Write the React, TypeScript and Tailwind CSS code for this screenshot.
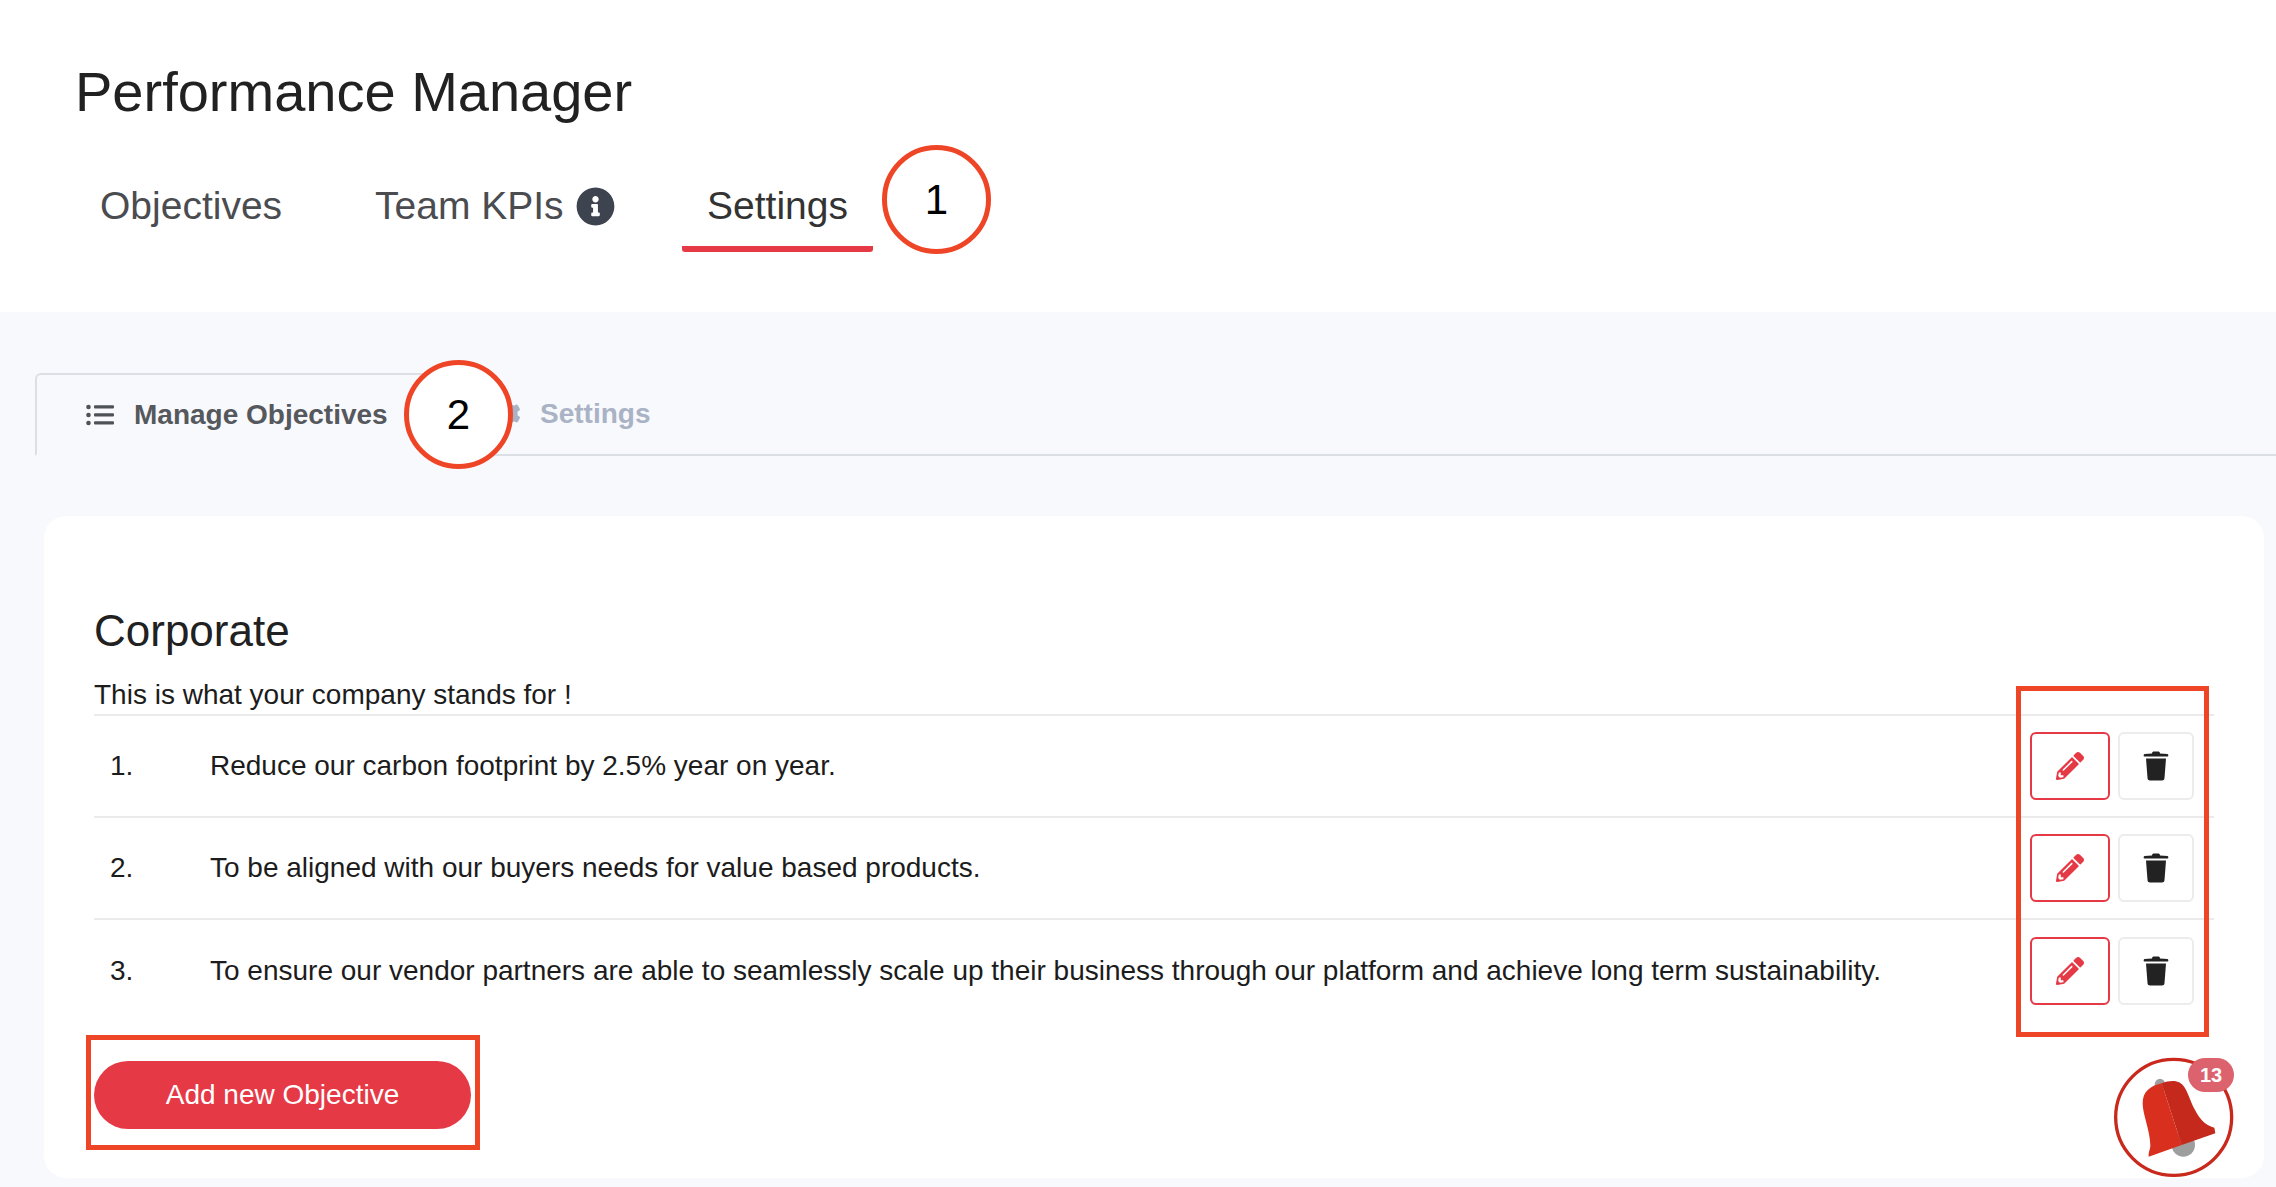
import { FaPencilAlt, FaInfoCircle, FaCog } from 'react-icons/fa'

const font = "font-['Liberation_Sans',Arial,sans-serif]"

const objectives = [
  'Reduce our carbon footprint by 2.5% year on year.',
  'To be aligned with our buyers needs for value based products.',
  'To ensure our vendor partners are able to seamlessly scale up their business through our platform and achieve long term sustainability.',
]

function TrashIcon() {
  return (
    <svg viewBox="0 0 26 30" className="w-[26px] h-[30px]">
      <path fill="#222" d="M9 2.5 C9 1 10 .5 11 .5 H15 C16 .5 17 1 17 2.5 L24.5 3 C25.5 3.2 25.8 5.5 24.5 5.5 H1.5 C.2 5.5 .5 3.2 1.5 3 Z" />
      <path fill="#222" d="M3 7.5 H23 L21.5 27 C21.3 28.8 20.4 29.5 19 29.5 H7 C5.6 29.5 4.7 28.8 4.5 27 Z" />
    </svg>
  )
}

function Bell() {
  return (
    <div className="absolute left-[2100px] top-[1050px] h-[137px] w-[150px]">
      <svg viewBox="0 0 450 411" className="h-[137px] w-[150px]">
        <circle cx="221" cy="202" r="174" fill="#fff" stroke="#c9281c" strokeWidth="10" />
        <ellipse cx="180" cy="106" rx="16" ry="20" fill="#9e9e9e" />
        <circle cx="250" cy="285" r="35" fill="#9e9e9e" />
        <path fill="#d92f1e" d="M185 100 C150 108 128 125 128 160 C128 195 150 240 151 285 C151 300 145 303 146 320 L245 285 Z" />
        <path fill="#c4291b" d="M185 100 C205 92 225 90 240 98 C262 112 268 150 285 180 C300 210 320 228 343 233 L346 250 L245 285 Z" />
      </svg>
      <span className="absolute left-[88px] top-[8px] flex h-[34px] w-[46px] items-center justify-center rounded-full bg-[#dc626d] text-[20px] font-bold text-white">
        13
      </span>
    </div>
  )
}

export default function App() {
  return (
    <div className={`relative h-[1187px] w-[2276px] overflow-hidden bg-[#f8f9fc] ${font}`}>
      <header className="h-[312px] bg-white pl-[75px] pt-[58px]">
        <h1 className="text-[56px] leading-[68px] text-[#212121]">Performance Manager</h1>
        <nav className="mt-[55px] flex items-start text-[39px] leading-[50px] text-[#4a4c50]">
          <a className="ml-[25px] w-[275px]">Objectives</a>
          <a className="flex w-[307px] items-center gap-[12px]">
            Team KPIs
            <FaInfoCircle className="text-[39px] text-[#3d4450]" />
          </a>
          <a className="w-[191px] rounded-[3px] border-b-[6px] border-[#e63946] pb-[15px] text-center text-[#333]">
            Settings
          </a>
        </nav>
      </header>

      <main className="pt-[61px]">
        <div className="ml-[35px] flex h-[83px] items-stretch border-b-2 border-[#dcdfe3]">
          <div className="-mb-[2px] flex w-[430px] items-center gap-[20px] rounded-t-md border-x-2 border-t-2 border-b-2 border-[#dcdfe3] border-b-[#f8f9fc] pl-[49px] text-[28px] font-bold text-[#55585c]">
            <svg viewBox="0 0 28 22" className="h-[22px] w-[28px]" fill="#4f5256">
              <circle cx="2.5" cy="3" r="2.3" />
              <circle cx="2.5" cy="11" r="2.3" />
              <circle cx="2.5" cy="19" r="2.3" />
              <rect x="8" y="1.2" width="20" height="3.4" rx="1" />
              <rect x="8" y="9.2" width="20" height="3.4" rx="1" />
              <rect x="8" y="17.2" width="20" height="3.4" rx="1" />
            </svg>
            Manage Objectives
          </div>
          <div className="ml-[29px] flex items-center gap-[19px] text-[28px] font-bold text-[#a9b3c5]">
            <FaCog className="text-[27px]" />
            Settings
          </div>
        </div>

        <section className="ml-[44px] mr-[12px] mt-[60px] h-[662px] rounded-[22px] bg-white px-[50px] pt-[89px]">
          <h2 className="text-[44px] leading-[52px] text-[#212121]">Corporate</h2>
          <p className="mt-[22px] border-b-2 border-[#ebebeb] pb-[3px] text-[28px] leading-[32px] text-[#1c1c1c]">
            This is what your company stands for !
          </p>
          <ol>
            {objectives.map((text, i) => (
              <li
                key={i}
                className="flex h-[102px] items-center border-b-2 border-[#ebebeb] text-[28px] text-[#1c1c1c] last:border-b-0"
              >
                <span className="ml-[16px] w-[100px]">{i + 1}.</span>
                <span className="flex-1">{text}</span>
                <button className="flex h-[68px] w-[80px] items-center justify-center rounded-md border-2 border-[#e63946] text-[28px] text-[#e63946]">
                  <FaPencilAlt />
                </button>
                <button className="ml-[8px] mr-[20px] flex h-[68px] w-[76px] items-center justify-center rounded-md border-2 border-[#ececec]">
                  <TrashIcon />
                </button>
              </li>
            ))}
          </ol>
          <button className="mt-[39px] h-[68px] w-[377px] rounded-full bg-[#e63946] text-[28px] text-white">
            Add new Objective
          </button>
        </section>
      </main>

      {/* annotation overlays */}
      <div className="absolute left-[882px] top-[145px] flex h-[109px] w-[109px] items-center justify-center rounded-full border-[5px] border-[#ee4527] bg-white text-[42px] text-black">
        1
      </div>
      <div className="absolute left-[404px] top-[360px] flex h-[109px] w-[109px] items-center justify-center rounded-full border-[5px] border-[#ee4527] bg-white text-[42px] text-black">
        2
      </div>
      <div className="absolute left-[2016px] top-[686px] h-[351px] w-[193px] border-[5px] border-[#ee4527]" />
      <div className="absolute left-[86px] top-[1035px] h-[115px] w-[394px] border-[5px] border-[#ee4527]" />
      <Bell />
    </div>
  )
}
